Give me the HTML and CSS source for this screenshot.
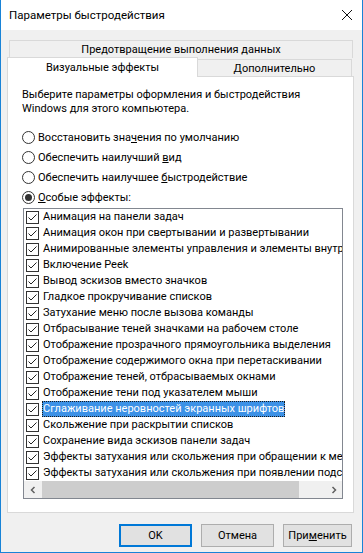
FILE: index.html
```html
<!DOCTYPE html>
<html>
  <head>
    <title>Параметры быстродействия</title>
    <link rel="stylesheet" href="styles.css">
  </head>
  <body>
    <div class="window">
      <div class="titlebar">
        <span class="title">Параметры быстродействия</span>
        <svg class="close" width="12" height="12" viewBox="0 0 12 12">
          <path d="M1 1 L11 11 M11 1 L1 11" stroke="#111" stroke-width="1" fill="none"/>
        </svg>
      </div>

      <div class="main">
        <div class="tab-row upper">
          <div class="tab wide">Предотвращение выполнения данных</div>
        </div>
        <div class="tab-row lower">
          <div class="tab active">Визуальные эффекты</div>
          <div class="tab other">Дополнительно</div>
        </div>

        <div class="panel">
          <p class="intro">Выберите параметры оформления и быстродействия<br>Windows для этого компьютера.</p>

          <div class="radios">
            <div class="radio"><span class="circle"></span><span>Восстановить зна<u>ч</u>ения по умолчанию</span></div>
            <div class="radio"><span class="circle"></span><span>Обеспечить наилучший <u>в</u>ид</span></div>
            <div class="radio"><span class="circle"></span><span>Обеспечить наилучшее <u>б</u>ыстродействие</span></div>
            <div class="radio"><span class="circle on"></span><span><u>О</u>собые эффекты:</span></div>
          </div>

          <div class="listbox">
            <ul class="items">
              <li><span class="check"></span><span class="label">Анимация на панели задач</span></li>
              <li><span class="check"></span><span class="label">Анимация окон при свертывании и развертывании</span></li>
              <li><span class="check"></span><span class="label">Анимированные элементы управления и элементы внутри окна</span></li>
              <li><span class="check"></span><span class="label">Включение Peek</span></li>
              <li><span class="check"></span><span class="label">Вывод эскизов вместо значков</span></li>
              <li><span class="check"></span><span class="label">Гладкое прокручивание списков</span></li>
              <li><span class="check"></span><span class="label">Затухание меню после вызова команды</span></li>
              <li><span class="check"></span><span class="label">Отбрасывание теней значками на рабочем столе</span></li>
              <li><span class="check"></span><span class="label">Отображение прозрачного прямоугольника выделения</span></li>
              <li><span class="check"></span><span class="label">Отображение содержимого окна при перетаскивании</span></li>
              <li><span class="check"></span><span class="label">Отображение теней, отбрасываемых окнами</span></li>
              <li><span class="check"></span><span class="label">Отображение тени под указателем мыши</span></li>
              <li class="selected"><span class="check"></span><span class="label">Сглаживание неровностей экранных шрифтов</span></li>
              <li><span class="check"></span><span class="label">Скольжение при раскрытии списков</span></li>
              <li><span class="check"></span><span class="label">Сохранение вида эскизов панели задач</span></li>
              <li><span class="check"></span><span class="label">Эффекты затухания или скольжения при обращении к меню</span></li>
              <li><span class="check"></span><span class="label">Эффекты затухания или скольжения при появлении подсказок</span></li>
            </ul>
            <div class="hscroll">
              <span class="arrow">
                <svg width="8" height="8" viewBox="0 0 8 8"><path d="M5.5 1 L2.5 4 L5.5 7" stroke="#606060" stroke-width="1.5" fill="none"/></svg>
              </span>
              <div class="track"><div class="thumb"></div></div>
              <span class="arrow">
                <svg width="8" height="8" viewBox="0 0 8 8"><path d="M2.5 1 L5.5 4 L2.5 7" stroke="#606060" stroke-width="1.5" fill="none"/></svg>
              </span>
            </div>
          </div>
        </div>

        <div class="buttons">
          <button class="btn default">OK</button>
          <button class="btn">Отмена</button>
          <button class="btn apply">При<u>м</u>енить</button>
        </div>
      </div>
    </div>
  </body>
</html>
```

FILE: styles.css
```css
body {
  margin: 0;
  font-family: Roboto, "Noto Sans", sans-serif;
  font-size: 11px;
  color: #000000;
  background-color: #f0f0f0;
}

.window {
  box-sizing: border-box;
  width: 363px;
  height: 553px;
  border: 1px solid #1883d7;
  border-top: none;
  background-color: #f0f0f0;
}

.titlebar {
  height: 30px;
  background-color: #ffffff;
  display: flex;
  align-items: center;
  justify-content: space-between;
  padding: 0 9px 0 8px;
}

.title {
  font-size: 11.5px;
}

.main {
  padding: 10px 8px 0 6px;
}

/* tabs */
.tab-row {
  display: flex;
}

.upper {
  padding: 0 1px 0 2px;
}

.lower {
  height: 19px;
  align-items: flex-end;
  margin-top: -1px;
}

.tab {
  box-sizing: border-box;
  border: 1px solid #d9d9d9;
  border-bottom: none;
  background-color: #f0f0f0;
  display: flex;
  align-items: center;
  justify-content: center;
}

.wide {
  flex: 1;
  height: 18px;
}

.active {
  width: 191px;
  height: 20px;
  margin-bottom: -1px;
  background-color: #ffffff;
  position: relative;
  z-index: 1;
  padding-bottom: 1px;
}

.other {
  width: 154px;
  height: 17px;
  border-left: none;
  padding-top: 1px;
}

/* panel */
.panel {
  box-sizing: border-box;
  height: 437px;
  border: 1px solid #d9d9d9;
  background-color: #ffffff;
  padding: 11px 10px 0 14px;
}

.intro {
  margin: 0;
  line-height: 14px;
}

.radios {
  margin-top: 11px;
}

.radio {
  height: 20px;
  display: flex;
  align-items: center;
}

.circle {
  box-sizing: border-box;
  width: 13px;
  height: 13px;
  border: 1px solid #333333;
  border-radius: 50%;
  margin-right: 3px;
  display: flex;
  align-items: center;
  justify-content: center;
}

.circle.on::after {
  content: "";
  width: 7px;
  height: 7px;
  border-radius: 50%;
  background-color: #333333;
}

/* list of effects */
.listbox {
  box-sizing: border-box;
  height: 291px;
  margin: 1px 0 0 1px;
  border: 1px solid #828790;
  overflow: hidden;
}

.items {
  list-style: none;
  margin: 0;
  padding: 0;
  height: 272px;
}

.items li {
  height: 16px;
  display: flex;
  align-items: center;
  white-space: nowrap;
  padding-left: 2px;
}

.check {
  flex: none;
  box-sizing: border-box;
  width: 13px;
  height: 13px;
  border: 1px solid #333333;
  background-color: #ffffff;
  margin-right: 3px;
  background-image: url("data:image/svg+xml;utf8,<svg xmlns='http://www.w3.org/2000/svg' width='11' height='11'><path d='M1.5 5.5 L4 8 L9.5 2.5' stroke='%23222' stroke-width='1' fill='none'/></svg>");
}

.label {
  line-height: 16px;
  padding: 0 1px;
}

.selected .label {
  background-color: #3c91e6;
  color: #ffffff;
  outline: 1px dotted #1a1a1a;
  outline-offset: -1px;
}

.hscroll {
  display: flex;
  height: 17px;
  background-color: #f0f0f0;
}

.arrow {
  width: 17px;
  display: flex;
  align-items: center;
  justify-content: center;
}

.track {
  flex: 1;
  padding: 0 26px 0 1px;
}

.thumb {
  height: 17px;
  background-color: #cdcdcd;
}

/* dialog buttons */
.buttons {
  display: flex;
  justify-content: flex-end;
  gap: 9px;
  margin-top: 11px;
  padding-right: 2px;
}

.btn {
  box-sizing: border-box;
  width: 73px;
  height: 23px;
  font-family: Roboto, "Noto Sans", sans-serif;
  font-size: 11px;
  color: #000000;
  background-color: #e1e1e1;
  border: 1px solid #adadad;
  padding: 0;
}

.default {
  border: 2px solid #0078d7;
}

.apply {
  width: 69px;
}
```
